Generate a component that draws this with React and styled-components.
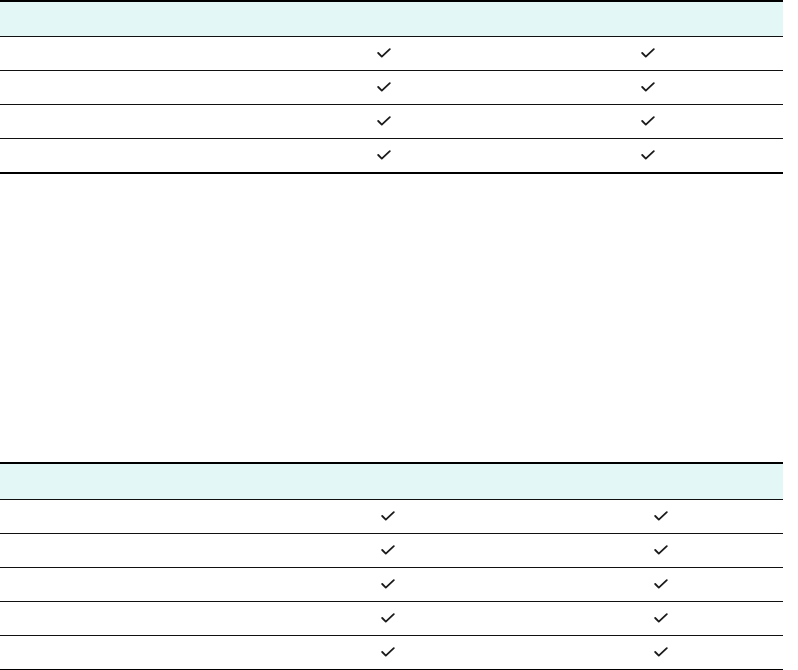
import React from 'react';
import styled, { createGlobalStyle } from 'styled-components';

const Global = createGlobalStyle`
  body {
    margin: 0;
    background: #fff;
    font-family: "Liberation Sans", Arial, sans-serif;
    font-size: 14px;
    color: #222;
  }
`

const Page = styled.div`
  width: 783px;
  display: flex;
  flex-direction: column;
`

const Table = styled.table`
  width: 100%;
  border-collapse: separate;
  border-spacing: 0;
  table-layout: fixed;
  border-top: 2px solid #000;
  border-bottom: 2px solid #000;
  margin-top: ${p => p.offset || 0}px;
`

const HeadCell = styled.th`
  height: ${p => p.h}px;
  padding: 0;
  background: #e2f7f6;
  border-bottom: 1px solid #111;
`

const Cell = styled.td`
  height: 33px;
  padding: 0;
  text-align: center;
  vertical-align: middle;
  border-bottom: 1px solid #111;

  tr:last-child > & {
    border-bottom: none;
  }
`

const CheckMark = styled.svg`
  display: block;
  margin: -2px auto 0;
`

const Check = () => (
  <CheckMark width="14" height="10" viewBox="0 0 14 10" fill="none">
    <path d="M1.2 5 L4.8 8.6 L12.8 1.2" stroke="#1a1a1a" strokeWidth="1.8" strokeLinecap="round" strokeLinejoin="round" />
  </CheckMark>
)

const CheckTable = ({ cols, rows, headHeight, offset }) => (
  <Table offset={offset}>
    <colgroup>
      {cols.map((w, i) => <col key={i} style={{ width: w }} />)}
    </colgroup>
    <thead>
      <tr>
        <HeadCell h={headHeight} />
        <HeadCell h={headHeight} />
        <HeadCell h={headHeight} />
      </tr>
    </thead>
    <tbody>
      {Array.from({ length: rows }).map((_, i) => (
        <tr key={i}>
          <Cell />
          <Cell><Check /></Cell>
          <Cell><Check /></Cell>
        </tr>
      ))}
    </tbody>
  </Table>
)

const App = () => (
  <Page>
    <Global />
    <CheckTable cols={[255, 258, 270]} rows={4} headHeight={34} />
    <CheckTable cols={[237, 302, 244]} rows={5} headHeight={35} offset={288} />
  </Page>
)

export default App;
